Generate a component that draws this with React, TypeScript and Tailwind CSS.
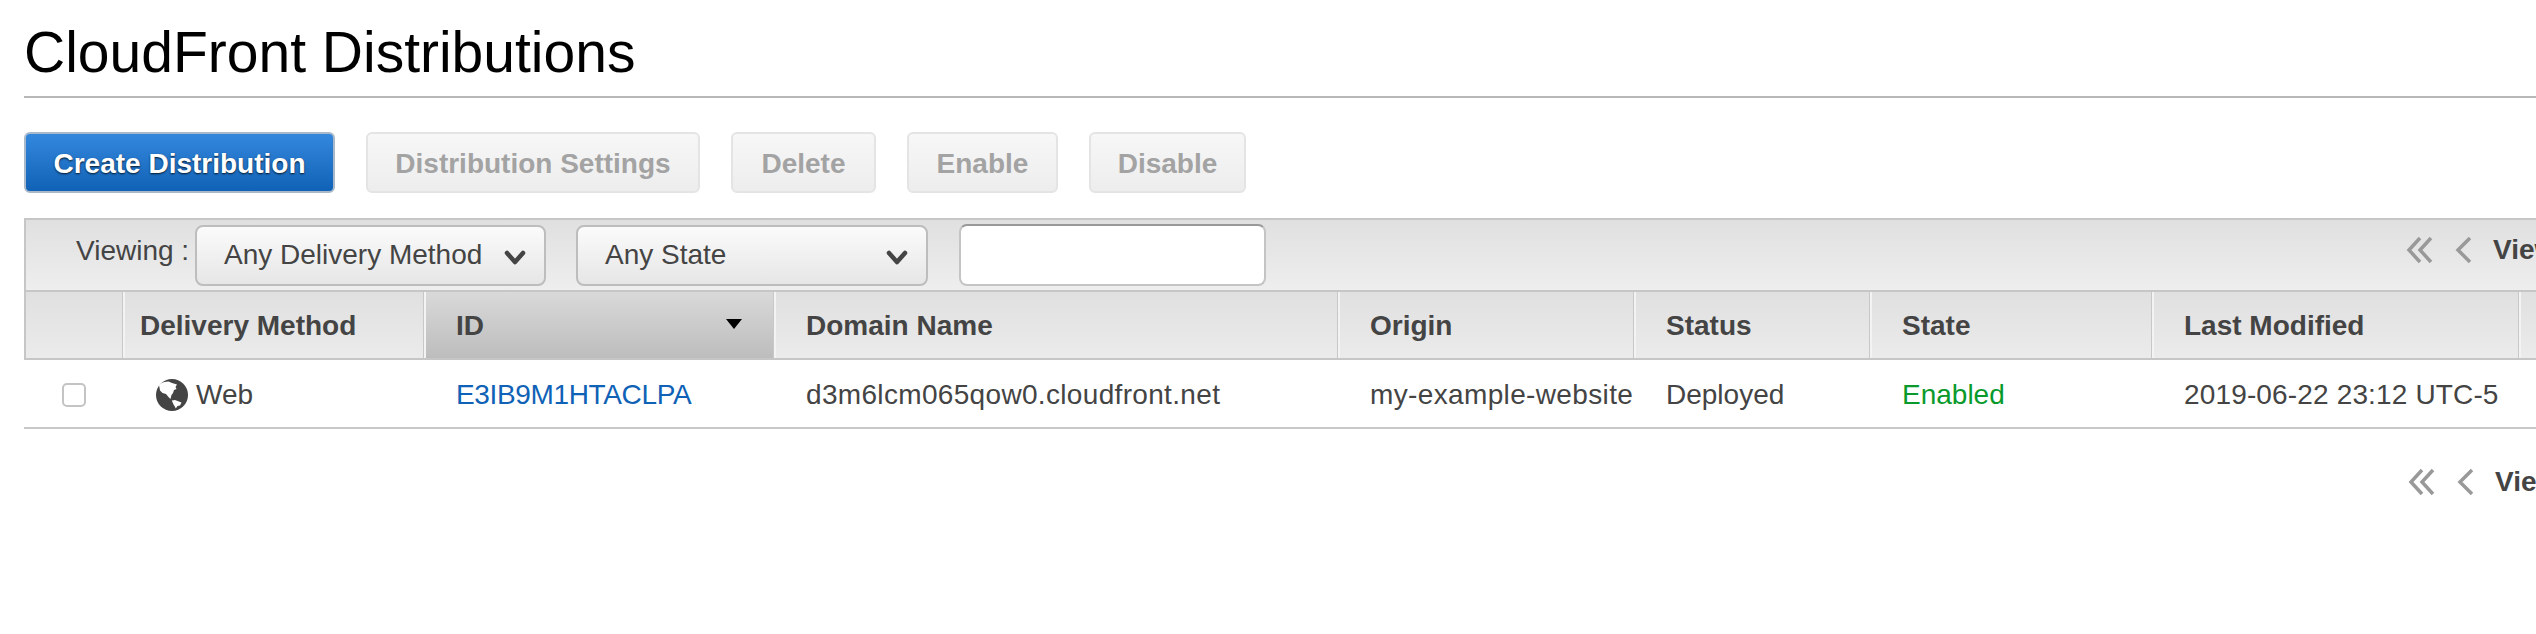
import React from "react";

const Globe = () => (
  <svg width="32" height="32" viewBox="0 0 32 32" className="shrink-0">
    <circle cx="16" cy="16" r="16" fill="#444" />
    <path d="M3 6 C6 3 9 2.5 12.5 2.5 L16 4 L21 5.5 L19.5 8 L20.5 10 L18 11 L17 14 L15.5 16 L14.5 20 L12.5 18 L10 15 L6.5 14 L4 11.5 Z" fill="#fff" />
    <path d="M15.8 21.5 L19 21 L25.5 23.5 L24 26.5 L21.5 27 L19.8 29.5 L18.5 27 L17.5 25.5 Z" fill="#fff" />
  </svg>
);

const Chevron = () => (
  <svg width="22" height="16" viewBox="0 0 22 16" className="shrink-0 mt-[4px]">
    <path d="M3 3 L11 12 L19 3" fill="none" stroke="#444" strokeWidth="4.5" strokeLinejoin="round" strokeLinecap="round" />
  </svg>
);

const Pager = ({ cls }: { cls: string }) => (
  <div className={`flex items-center shrink-0 text-[28px] font-bold text-[#444] whitespace-nowrap ${cls}`}>
    <svg width="28" height="28" viewBox="0 0 28 28" className="shrink-0">
      <path d="M14 2 L3 14 L14 26 M25 2 L14 14 L25 26" fill="none" stroke="#999" strokeWidth="3.5" />
    </svg>
    <svg width="18" height="28" viewBox="0 0 18 28" className="ml-[21px] shrink-0">
      <path d="M15 2 L3 14 L15 26" fill="none" stroke="#999" strokeWidth="3.5" />
    </svg>
    <span className="ml-[20px]">Viewing 1 to 1 of 1 Items</span>
  </div>
);

const Btn = ({ label, w }: { label: string; w: string }) => (
  <button className={`${w} h-[61px] shrink-0 pt-[2px] rounded-[6px] border-2 border-[#e4e4e4] bg-gradient-to-b from-[#f7f7f7] to-[#ededed] text-[28px] font-bold text-[#a3a3a3] text-center`}>
    {label}
  </button>
);

const Sel = ({ label, w }: { label: string; w: string }) => (
  <div className={`${w} h-[61px] shrink-0 mt-[5px] rounded-[8px] border-2 border-[#bdbdbd] bg-gradient-to-b from-[#fbfbfb] to-[#e6e6e6] flex items-center justify-between pl-[27px] pr-[18px] text-[28px] text-[#444]`}>
    <span className="whitespace-nowrap -mt-[2px]">{label}</span>
    <Chevron />
  </div>
);

const headers = [
  { label: "", w: "w-[99px]" },
  { label: "Delivery Method", w: "w-[301px]", pl: "pl-[15px]" },
  { label: "ID", w: "w-[350px]", sorted: true },
  { label: "Domain Name", w: "w-[564px]" },
  { label: "Origin", w: "w-[296px]" },
  { label: "Status", w: "w-[236px]" },
  { label: "State", w: "w-[282px]" },
  { label: "Last Modified", w: "w-[367px]" },
  { label: "", w: "w-[200px]" },
];

export default function App() {
  return (
    <div className="w-full h-[634px] overflow-hidden bg-white font-['Liberation_Sans',Arial,sans-serif]">
      <div className="w-[2800px] ml-6">
        <h1 className="h-[98px] pt-[21px] text-[57px] leading-[62px] font-normal text-black border-b-2 border-[#b8b8b8]">
          CloudFront Distributions
        </h1>
        <div className="flex gap-[31px] mt-[34px]">
          <button className="w-[311px] h-[61px] shrink-0 pt-[2px] rounded-[6px] border-2 border-[#a9b9c9] bg-gradient-to-b from-[#3388dd] to-[#0f62b6] text-[28px] font-bold text-white text-center [text-shadow:0_1px_2px_rgba(0,0,0,0.8)]">
            Create Distribution
          </button>
          <Btn label="Distribution Settings" w="w-[334px]" />
          <Btn label="Delete" w="w-[145px]" />
          <Btn label="Enable" w="w-[151px]" />
          <Btn label="Disable" w="w-[157px]" />
        </div>
        <div className="mt-[25px] h-[74px] border-y-2 border-l-2 border-[#c6c6c6] bg-gradient-to-b from-[#e0e0e0] to-[#eeeeee] flex">
          <span className="ml-[50px] mr-[7px] w-[112px] shrink-0 pt-[16px] text-[28px] leading-[30px] text-[#444] whitespace-nowrap">Viewing :</span>
          <Sel label="Any Delivery Method" w="w-[351px]" />
          <div className="ml-[30px] shrink-0"><Sel label="Any State" w="w-[352px]" /></div>
          <div className="ml-[31px] mt-[4px] w-[307px] h-[62px] shrink-0 rounded-[8px] border-2 border-[#c4c4c4] border-t-[#999] bg-white" />
          <Pager cls="ml-[1140px] h-[60px]" />
        </div>
        <div className="flex h-[68px] border-b-2 border-l-2 border-[#c6c6c6] bg-gradient-to-b from-[#e0e0e0] to-[#ebebeb] text-[28px] font-bold text-[#444]">
          {headers.map((h, i) => (
            <div
              key={i}
              className={`${h.w} shrink-0 pt-[2px] border-r-2 border-[#f3f3f3] shadow-[inset_-1px_0_0_#c8c8c8] flex items-center justify-between ${h.pl ?? "pl-[30px]"} pr-[32px] ${h.sorted ? "bg-gradient-to-b from-[#d9d9d9] to-[#bdbdbd]" : ""}`}
            >
              <span className="whitespace-nowrap">{h.label}</span>
              {h.sorted && (
                <svg width="16" height="10" viewBox="0 0 16 10" className="-mt-[4px]">
                  <path d="M0 0 H16 L8 10 Z" fill="#000" />
                </svg>
              )}
            </div>
          ))}
        </div>
        <div className="flex items-center h-[69px] pt-[2px] border-b-2 border-[#c8c8c8] text-[28px] text-[#444]">
          <div className="w-[101px] shrink-0 pl-[38px]">
            <div className="w-[24px] h-[24px] rounded-[5px] border-2 border-[#c4c4c4] bg-white" />
          </div>
          <div className="w-[301px] shrink-0 flex items-center pl-[31px]">
            <Globe />
            <span className="ml-[8px]">Web</span>
          </div>
          <div className="w-[350px] shrink-0 pl-[30px] tracking-[-0.35px] text-[#0f62b6]">E3IB9M1HTACLPA</div>
          <div className="w-[564px] shrink-0 pl-[30px] tracking-[0.33px]">d3m6lcm065qow0.cloudfront.net</div>
          <div className="w-[296px] shrink-0 pl-[30px] tracking-[0.36px] whitespace-nowrap">my-example-website</div>
          <div className="w-[236px] shrink-0 pl-[30px]">Deployed</div>
          <div className="w-[282px] shrink-0 pl-[30px] text-[#0a9a2c]">Enabled</div>
          <div className="w-[367px] shrink-0 pl-[30px] tracking-[0.15px] whitespace-nowrap">2019-06-22 23:12 UTC-5</div>
        </div>
        <Pager cls="ml-[2384px] mt-[32px]" />
      </div>
    </div>
  );
}
